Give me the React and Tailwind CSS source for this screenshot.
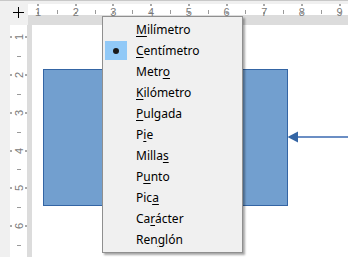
const UNIT = 37.7;
const cm = (i) => i * UNIT + 0.3;

const UNITS = [
    { pre: '', key: 'M', post: 'ilímetro' },
    { pre: '', key: 'C', post: 'entímetro', checked: true },
    { pre: 'Metr', key: 'o', post: '' },
    { pre: '', key: 'K', post: 'ilómetro' },
    { pre: '', key: 'P', post: 'ulgada' },
    { pre: 'P', key: 'i', post: 'e' },
    { pre: 'Milla', key: 's', post: '' },
    { pre: 'P', key: 'u', post: 'nto' },
    { pre: 'Pic', key: 'a', post: '' },
    { pre: 'Ca', key: 'r', post: 'ácter' },
    { pre: 'Ren', key: 'g', post: 'lón' },
];

function TopRuler() {
    const nums = [1, 2, 3, 4, 5, 6, 7, 8, 9];
    return (
        <div className="relative flex-1 h-[16px] bg-white">
            {nums.map((n) => {
                const x = cm(n) - 28;
                return (
                    <div key={n}>
                        <div className="absolute top-0 w-[2px] h-[2px] bg-[#a8a8a8]" style={{ left: x - 1 }} />
                        <div className="absolute bottom-[1px] w-[2px] h-[2px] bg-[#a8a8a8]" style={{ left: x - 1 }} />
                        <div
                            className="absolute top-[1px] w-[12px] text-center text-[11px] leading-[14px] text-[#7a7a7a] font-['Liberation_Sans',sans-serif]"
                            style={{ left: x - 6 }}
                        >
                            {n}
                        </div>
                        <div className="absolute top-[6px] w-[1px] h-[4px] bg-[#9a9a9a]" style={{ left: x - UNIT / 2 }} />
                    </div>
                );
            })}
        </div>
    );
}

function LeftRuler() {
    const nums = [1, 2, 3, 4, 5, 6];
    return (
        <div className="relative w-[17px] h-full bg-white overflow-hidden">
            {nums.map((n) => {
                const y = cm(n) - 0.6 - 25;
                return (
                    <div key={n}>
                        <div className="absolute left-0 w-[2px] h-[2px] bg-[#a8a8a8]" style={{ top: y - 1 }} />
                        <div className="absolute right-0 w-[2px] h-[2px] bg-[#a8a8a8]" style={{ top: y - 1 }} />
                        <div
                            className="absolute left-[2px] w-[13px] h-[12px] flex items-center justify-center text-[11px] leading-[12px] text-[#7a7a7a] font-['Liberation_Sans',sans-serif] -rotate-90"
                            style={{ top: y - 6 }}
                        >
                            {n}
                        </div>
                        <div className="absolute left-[7px] w-[4px] h-[1px] bg-[#9a9a9a]" style={{ top: y + UNIT / 2 }} />
                    </div>
                );
            })}
        </div>
    );
}

function UnitMenu() {
    return (
        <div className="absolute left-[102px] top-[16px] w-[141px] h-[237px] bg-[#f0f0f0] border border-[#8f8f8f] shadow-[2px_2px_2px_rgba(0,0,0,0.35)] pt-[2px] font-['Noto_Sans',sans-serif] text-[12px] text-black">
            {UNITS.map((u, i) => (
                <div key={i} className="relative h-[21px] flex items-center pl-[33px]">
                    {u.checked && (
                        <div className="absolute left-[2px] top-[1px] w-[22px] h-[19px] bg-[#91c9f7] flex items-center justify-center">
                            <div className="w-[6px] h-[6px] rounded-full bg-[#1a1a1a]" />
                        </div>
                    )}
                    <span className="leading-none">
                        {u.pre}
                        <span className="underline underline-offset-[2px]">{u.key}</span>
                        {u.post}
                    </span>
                </div>
            ))}
        </div>
    );
}

export default function App() {
    return (
        <div className="relative w-[348px] h-[257px] overflow-hidden bg-white">
            {/* Top ruler row */}
            <div className="flex h-[25px] bg-[#f0f0f0] border-t border-[#c8c8c8]">
                <div className="relative w-[28px] h-full">
                    <div className="absolute left-[13px] top-[11px] w-[11px] h-[1px] bg-black" />
                    <div className="absolute left-[18px] top-[6px] w-[1px] h-[11px] bg-black" />
                </div>
                <div className="flex-1 flex flex-col overflow-hidden">
                    <div className="h-[3px]" />
                    <TopRuler />
                    <div className="flex-1 bg-[#dcdcdc]" />
                </div>
            </div>

            {/* Body */}
            <div className="flex h-[232px]">
                <div className="flex w-[32px] h-full">
                    <div className="w-[10px] bg-[#f0f0f0]" />
                    <LeftRuler />
                    <div className="w-[5px] bg-[#dcdcdc]" />
                </div>
                <div className="relative flex-1 bg-white" />
            </div>

            {/* Drawing objects */}
            <div className="absolute left-[43px] top-[69px] w-[245px] h-[137px] bg-[#729fcf] border border-[#3465a4]" />
            <svg className="absolute left-[286px] top-[129px]" width="62" height="16" viewBox="0 0 62 16">
                <line x1="11" y1="8" x2="62" y2="8" stroke="#6b8ec4" strokeWidth="2" />
                <polygon points="1.5,8 12,2.5 12,13.5" fill="#3465a4" />
            </svg>

            <UnitMenu />
        </div>
    );
}
